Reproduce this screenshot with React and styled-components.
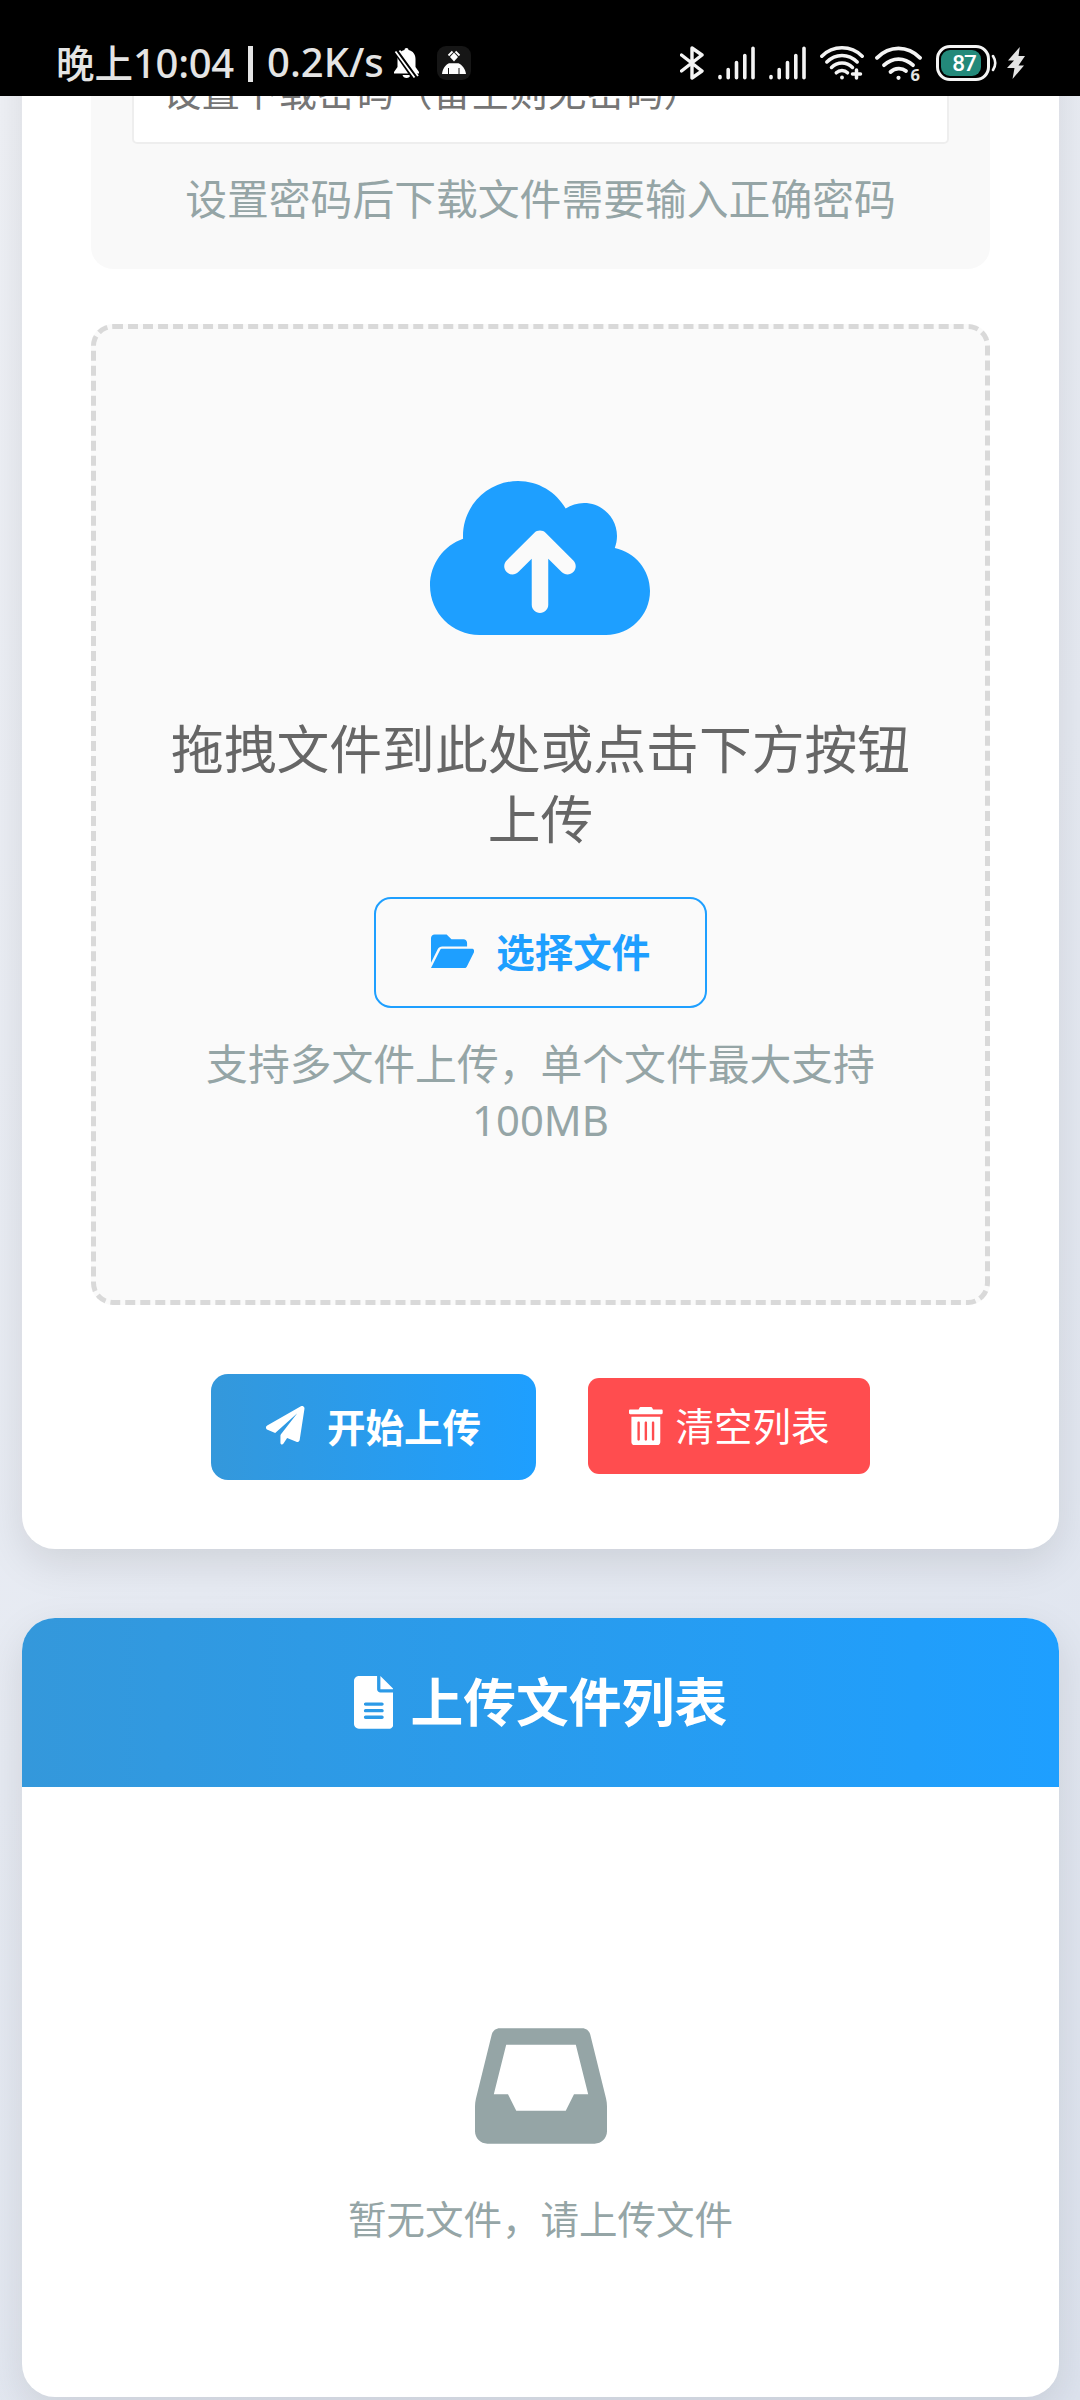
import React from 'react'
import styled, { createGlobalStyle } from 'styled-components';
import { FaCloudArrowUp } from 'react-icons/fa6';

function StatusBar() {
    return (
        <StatusWrap>
            <StatusLeft>
                <Clock>晚上<span>10:04</span></Clock>
                <Divider />
                <Speed>0.2K/s</Speed>
                <BellOffIcon />
                <AppIcon />
            </StatusLeft>
            <StatusRight>
                <BluetoothIcon />
                <SignalIcon />
                <SignalIcon />
                <WifiPlusIcon />
                <WifiSix>
                    <WifiIcon />
                    <span>6</span>
                </WifiSix>
                <Battery>
                    <BatteryBody><BatteryLevel>87</BatteryLevel></BatteryBody>
                    <svg width="7" height="18" viewBox="0 0 7 18">
                        <path d="M2 2Q6.500 9 2 16" stroke="#f4f4f4" strokeWidth="2.600" fill="none" strokeLinecap="round" />
                    </svg>
                </Battery>
                <BoltIcon />
            </StatusRight>
        </StatusWrap>
    );
}

function BellOffIcon() {
    return (
        <svg width="27" height="32" viewBox="0 0 27 32">
            <path d="M13.500 1c1.300 0 2 .8 2 2 4.600 1 7 4.500 7 9v8l3.500 5v1.500H1V25l3.500-5v-8c0-4.500 2.400-8 7-9 0-1.200.7-2 2-2z" fill="#fff" />
            <path d="M9.500 28h8c-.5 2-2 3-4 3s-3.500-1-4-3z" fill="#fff" />
            <path d="M2 2l21 30" stroke="#000" strokeWidth="6.500" />
            <path d="M2.500 4.500l19 26M6.500 3.500l18.500 25.500" stroke="#fff" strokeWidth="1.800" />
        </svg>
    );
}

function AppIcon() {
    return (
        <svg width="34" height="34" viewBox="0 0 34 34">
            <rect width="34" height="34" rx="9" fill="#161616" />
            <path d="M17 6.500l4 4.500-4 4.500-4-4.500z" fill="#fff" />
            <path d="M11.500 9.500l4-4M22.500 9.500l-4-4" stroke="#fff" strokeWidth="1.800" />
            <path d="M5 28c.5-5 3-9 7-10.800h9.500c4 1.800 6.800 5.800 7.500 10.800z" fill="#fff" />
            <path d="M11.500 22v6M22 22v6" stroke="#161616" strokeWidth="1" />
        </svg>
    );
}

function BluetoothIcon() {
    return (
        <svg width="24" height="34" viewBox="0 0 24 34">
            <path d="M1.500 9l20.500 16-10 7V2l10 7L1.500 25" stroke="#f4f4f4" strokeWidth="3.400" fill="none" strokeLinejoin="round" strokeLinecap="round" />
        </svg>
    );
}

function SignalIcon() {
    return (
        <svg width="37" height="34" viewBox="0 0 37 34">
            <path d="M2 30.500v1.300M10.200 23.500v8.300M18.500 16.500v15.300M26.800 9.500v22.300M35 2.300v29.500" stroke="#f4f4f4" strokeWidth="3.600" strokeLinecap="round" />
        </svg>
    );
}

function WifiPlusIcon() {
    return (
        <svg width="44" height="34" viewBox="0 0 44 34">
            <g stroke="#f4f4f4" strokeWidth="3.500" fill="none" strokeLinecap="round">
                <path d="M1.800 10.200C13-1 31-1 42.200 10.200" />
                <path d="M6.800 16C15.500 7.300 28.500 7.300 37.200 16" />
                <path d="M11.500 21.500C17.500 15.500 26.500 15.500 32.500 21.500" />
                <path d="M16.300 26.800C19.500 23.800 24.500 23.800 27.500 26.800" />
                <path d="M32.500 28h8M36.500 24v8" />
            </g>
            <circle cx="22" cy="31.500" r="1.900" fill="#f4f4f4" />
        </svg>
    );
}

function WifiIcon() {
    return (
        <svg width="47" height="36" viewBox="0 0 47 36">
            <g stroke="#f4f4f4" strokeWidth="3.800" fill="none" strokeLinecap="round">
                <path d="M2 12.800C14.500.2 32.500.2 45 12.800" />
                <path d="M9 20.200C17.500 12 29.500 12 38 20.200" />
                <path d="M15.500 27C20 22.800 27 22.800 31 26" />
            </g>
            <circle cx="23.500" cy="32.800" r="2.100" fill="#f4f4f4" />
        </svg>
    );
}

function BoltIcon() {
    return (
        <svg width="18" height="32" viewBox="0 0 18 32">
            <path d="M12.800 0L1 13.500h6L0 21h7.500L5.500 32 17 18.500h-5.500L18 9h-6.500z" fill="#e4e4e4" />
        </svg>
    );
}

function FolderIcon() {
    return (
        <svg width="43.300" height="38.500" viewBox="0 0 576 512" fill="currentColor">
            <path d="M147.800 192H480V144C480 117.500 458.500 96 432 96h-160l-64-64h-160C21.490 32 0 53.490 0 80v328.400l90.540-181.100C101.400 205.600 123.400 192 147.800 192zM543.100 224H147.800C135.700 224 124.600 230.800 119.200 241.700L0 480h447.100c12.120 0 23.200-6.852 28.620-17.690l96-192C583.200 249 567.700 224 543.100 224z" />
        </svg>
    );
}

function PlaneIcon() {
    return (
        <svg width="38.500" height="38.500" viewBox="0 0 512 512" fill="currentColor">
            <path d="M511.600 36.860l-64 415.100c-1.500 9.734-7.375 18.220-15.970 23.050c-4.844 2.719-10.270 4.097-15.680 4.097c-4.188 0-8.319-.8154-12.290-2.472l-122.600-51.100l-50.860 76.290C226.300 508.500 219.800 512 212.800 512C201.300 512 192 502.700 192 491.200v-96.180c0-7.115 2.372-14.030 6.742-19.640L416 96l-293.700 264.300L19.690 317.500C8.438 312.800 .8125 302.200 .0625 289.100s5.469-23.720 16.060-29.770l448-255.100c10.690-6.109 23.880-5.547 34 1.406S513.500 24.720 511.600 36.860z" />
        </svg>
    );
}

function TrashIcon() {
    return (
        <svg width="33.700" height="38.500" viewBox="0 0 448 512" fill="currentColor">
            <path d="M32 464C32 490.500 53.500 512 80 512h288c26.500 0 48-21.500 48-48V128H32V464zM304 208C304 199.100 311.100 192 320 192s16 7.125 16 16v224c0 8.875-7.125 16-16 16s-16-7.125-16-16V208zM208 208C208 199.100 215.100 192 224 192s16 7.125 16 16v224c0 8.875-7.125 16-16 16s-16-7.125-16-16V208zM112 208C112 199.100 119.100 192 128 192s16 7.125 16 16v224C144 440.900 136.900 448 128 448s-16-7.125-16-16V208zM432 32H320l-11.580-23.160c-2.709-5.420-8.250-8.844-14.310-8.844H153.900c-6.061 0-11.600 3.424-14.310 8.844L128 32H16c-8.836 0-16 7.162-16 16V80c0 8.836 7.164 16 16 16h416c8.838 0 16-7.164 16-16V48C448 39.160 440.800 32 432 32z" />
        </svg>
    );
}

function FileIcon() {
    return (
        <svg width="39.600" height="52.800" viewBox="0 0 384 512" fill="currentColor">
            <path d="M256 0v128h128L256 0zM224 128L224 0H48C21.490 0 0 21.490 0 48v416C0 490.500 21.490 512 48 512h288c26.510 0 48-21.490 48-48V160h-127.100C238.300 160 224 145.700 224 128zM272 416h-160C103.200 416 96 408.800 96 400C96 391.200 103.200 384 112 384h160c8.836 0 16 7.162 16 16C288 408.800 280.800 416 272 416zM272 352h-160C103.200 352 96 344.800 96 336C96 327.200 103.200 320 112 320h160c8.836 0 16 7.162 16 16C288 344.800 280.800 352 272 352zM288 272C288 280.800 280.800 288 272 288h-160C103.200 288 96 280.800 96 272C96 263.200 103.200 256 112 256h160C280.800 256 288 263.200 288 272z" />
        </svg>
    );
}

function InboxIcon() {
    return (
        <svg width="132" height="132" viewBox="0 0 512 512" fill="currentColor">
            <path d="M447 56.250C443.500 42 430.700 32 416 32H96c-14.690 0-27.470 10-31.030 24.250L3.715 304.900C1.247 314.900 0 325.200 0 335.500v96.470c0 26.510 21.490 48 48 48h416c26.510 0 48-21.490 48-48v-96.470c0-10.320-1.247-20.600-3.715-30.610L447 56.250zM352 352H160L128 288H72.970L121 96h270l48.030 192H384L352 352z" />
        </svg>
    );
}

function App() {
    return (
        <Screen>
            <GlobalStyle />
            <StatusBar />
            <Content>
                <UploadCard>
                    <PasswordBox>
                        <PasswordInput placeholder="设置下载密码（留空则无密码）" />
                        <PasswordTip>设置密码后下载文件需要输入正确密码</PasswordTip>
                    </PasswordBox>
                    <DropZone>
                        <FaCloudArrowUp className="cloudIcon" />
                        <DropTitle>拖拽文件到此处或点击下方按钮上传</DropTitle>
                        <SelectButton><FolderIcon /><span>选择文件</span></SelectButton>
                        <DropTip>支持多文件上传，单个文件最大支持<span>100MB</span></DropTip>
                    </DropZone>
                    <ButtonRow>
                        <StartButton><PlaneIcon /><span>开始上传</span></StartButton>
                        <ClearButton><TrashIcon /><span>清空列表</span></ClearButton>
                    </ButtonRow>
                </UploadCard>
                <ListCard>
                    <ListHeader><FileIcon /><span>上传文件列表</span></ListHeader>
                    <EmptyState>
                        <InboxIcon />
                        <p>暂无文件，请上传文件</p>
                    </EmptyState>
                </ListCard>
            </Content>
        </Screen>
    );
}

export default App


const GlobalStyle = createGlobalStyle`
    * {
        box-sizing: border-box;
    }

    body {
        margin: 0;
        font-family: "Noto Sans CJK SC", sans-serif;
    }

    p, h2 {
        margin: 0;
    }

    svg {
        display: block;
        flex-shrink: 0;
    }
`;

const Screen = styled.div`
    width: 1080px;
    height: 2400px;
    display: flex;
    flex-direction: column;
    overflow: hidden;
`;

const StatusWrap = styled.div`
    height: 96px;
    flex-shrink: 0;
    padding: 31px 55px 0 56px;
    display: flex;
    justify-content: space-between;
    background: #000;
    color: #e4e4e4;
`;

const StatusLeft = styled.div`
    display: flex;
    align-items: center;
    height: 64px;
    font-size: 40px;
    font-weight: 500;
    line-height: 62px;
    white-space: nowrap;

    svg:last-child {
        margin-left: 17px;
    }
`;

const Clock = styled.div`
    width: 178px;
    margin-top: -2px;
    font-size: 38.5px;

    span {
        font-family: "Noto Sans", sans-serif;
        font-size: 40px;
        letter-spacing: -.3px;
    }
`;

const Divider = styled.div`
    width: 5px;
    height: 36px;
    margin: 2px 14px 0 14px;
    background: #e4e4e4;
`;

const Speed = styled.div`
    width: 126px;
    margin-top: -2px;
    font-family: "Noto Sans", sans-serif;
`;

const StatusRight = styled.div`
    display: flex;
    align-items: center;
    gap: 14px;
    height: 64px;
`;

const WifiSix = styled.div`
    position: relative;
    margin-left: -3px;

    span {
        position: absolute;
        right: 2px;
        bottom: -3px;
        font-family: "Noto Sans", sans-serif;
        font-size: 16.5px;
        font-weight: 700;
        line-height: 18px;
    }
`;

const Battery = styled.div`
    display: flex;
    align-items: center;
    gap: 1px;
    margin-right: -5px;
`;

const BatteryBody = styled.div`
    width: 54px;
    height: 36px;
    padding: 2px;
    border: 3px solid #f4f4f4;
    border-radius: 14px;
`;

const BatteryLevel = styled.div`
    width: 40px;
    height: 26px;
    padding-left: 6px;
    border-radius: 9px;
    background: #23897a;
    color: #fff;
    font-family: Roboto, sans-serif;
    font-size: 22.5px;
    font-weight: 500;
    letter-spacing: -1px;
    line-height: 27px;
    text-align: center;
`;

const Content = styled.div`
    flex: 1;
    min-height: 0;
    padding: 0 21px 0 22px;
    overflow: hidden;
    background: linear-gradient(135deg, #eff1f6 0%, #dde3ee 100%);
`;

const Card = styled.div`
    border-radius: 33px;
    background: #fff;
    box-shadow: 0 14px 41px rgba(0, 0, 0, .1);
`;

const UploadCard = styled(Card)`
    margin-top: -167px;
    padding: 69px;
`;

const PasswordBox = styled.div`
    padding: 41px;
    border-radius: 22px;
    background: #f9f9f9;
`;

const PasswordInput = styled.input`
    display: block;
    width: 100%;
    height: 105px;
    padding: 0 0 5px 29px;
    border: 2px solid #eee;
    border-radius: 5px;
    outline: none;
    background: #fff;
    font-family: inherit;
    font-size: 38.5px;

    &::placeholder {
        color: #757575;
        opacity: 1;
    }
`;

const PasswordTip = styled.p`
    margin: 25px 0 2px;
    color: #95a5a6;
    font-size: 41.8px;
    line-height: 57px;
    text-align: center;
    white-space: nowrap;
`;

const DropZone = styled.div`
    display: flex;
    flex-direction: column;
    align-items: center;
    height: 981px;
    margin-top: 55px;
    padding-top: 141px;
    border: 5px dashed #d9d9d9;
    border-radius: 22px;
    background: #fafafa;

    .cloudIcon {
        width: 220px;
        height: 176px;
        margin-right: 1px;
        color: #1e9fff;
    }
`;

const DropTitle = styled.h2`
    width: 760px;
    margin-top: 65px;
    color: #666;
    font-size: 52.8px;
    font-weight: 400;
    line-height: 70px;
    text-align: center;
`;

const Button = styled.button`
    display: flex;
    align-items: center;
    padding: 0 55px;
    border: none;
    font-family: inherit;
    font-size: 38.5px;
    white-space: nowrap;

    span {
        margin-top: -5px;
    }
`;

const SelectButton = styled(Button)`
    height: 111px;
    margin-top: 46px;
    gap: 22px;
    border: 2px solid #1e9fff;
    border-radius: 17px;
    background: transparent;
    color: #1e9fff;
    font-weight: 700;

    svg {
        margin-top: -2px;
    }
`;

const DropTip = styled.p`
    width: 680px;
    margin-top: 26px;
    color: #95a5a6;
    font-size: 41.8px;
    line-height: 56px;
    text-align: center;

    span {
        font-family: "Noto Sans", sans-serif;
    }
`;

const ButtonRow = styled.div`
    display: flex;
    justify-content: center;
    align-items: center;
    gap: 52px;
    margin-top: 69px;
`;

const StartButton = styled(Button)`
    height: 106px;
    gap: 22px;
    border-radius: 17px;
    background: linear-gradient(to right, #3498db, #1e9fff);
    color: #fff;
    font-weight: 700;

    svg {
        margin-top: -3px;
    }
`;

const ClearButton = styled(Button)`
    height: 96px;
    margin-bottom: 2px;
    padding: 0 40px 0 41px;
    gap: 13px;
    border-radius: 11px;
    background: #ff4d4f;
    color: #fff;
`;

const ListCard = styled(Card)`
    height: 779px;
    margin-top: 69px;
    overflow: hidden;
`;

const ListHeader = styled.h2`
    display: flex;
    justify-content: center;
    align-items: center;
    gap: 17px;
    height: 169px;
    background: linear-gradient(to right, #3498db, #1e9fff);
    color: #fff;
    font-size: 52.8px;
    font-weight: 700;
    line-height: 70px;

    span {
        margin-top: -7px;
    }
`;

const EmptyState = styled.div`
    display: flex;
    flex-direction: column;
    align-items: center;
    padding-top: 233px;
    color: #95a5a6;

    p {
        margin-top: 39px;
        font-size: 38.5px;
        line-height: 52px;
    }
`;
